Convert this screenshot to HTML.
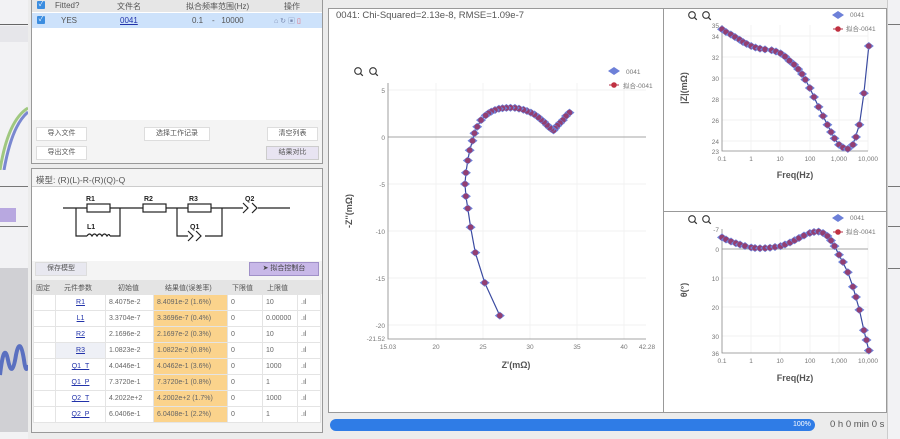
<!DOCTYPE html>
<html><head><meta charset="utf-8"><style>
*{margin:0;padding:0;box-sizing:border-box}
body{width:900px;height:439px;overflow:hidden;background:#f2f2f4;font-family:"Liberation Sans","Noto Sans CJK SC",sans-serif;position:relative;color:#444}
.a{position:absolute}
.btn{position:absolute;height:14px;background:#fff;border:1px solid #ddd;font-size:7px;color:#555;text-align:center;line-height:12px}
.t{position:absolute;font-size:7px;color:#555}
table{border-collapse:collapse}
td{font-size:7px;color:#666;height:16px;border:1px solid #e4e4e4;padding-left:3px;background:#fff}
</style></head><body>
<div class="a" style="left:0;top:24px;width:28px;height:1px;background:#666"></div>
<div class="a" style="left:0;top:26px;width:28px;height:16px;background:#e6e6ea"></div>
<svg class="a" style="left:0;top:90px" width="28" height="80"><path d="M0 80 Q8 30 28 18" stroke="#a0c880" stroke-width="3" fill="none"/><path d="M4 80 Q12 35 28 22" stroke="#7a88d0" stroke-width="3" fill="none"/></svg>
<div class="a" style="left:0;top:186px;width:28px;height:1px;background:#777"></div>
<div class="a" style="left:0;top:208px;width:16px;height:14px;background:#b8a8e0"></div>
<div class="a" style="left:0;top:226px;width:28px;height:1px;background:#777"></div>
<div class="a" style="left:0;top:268px;width:28px;height:164px;background:#d0d0d4"></div>
<svg class="a" style="left:0;top:335px" width="28" height="50"><path d="M0 40 Q4 5 8 25 Q12 45 16 20 Q20 0 24 25 Q26 40 28 30" stroke="#5a70c0" stroke-width="4" fill="none"/></svg>
<div class="a" style="left:888px;top:24px;width:12px;height:1px;background:#777"></div>
<div class="a" style="left:888px;top:186px;width:12px;height:1px;background:#777"></div>
<div class="a" style="left:888px;top:226px;width:12px;height:1px;background:#777"></div>
<div class="a" style="left:888px;top:268px;width:12px;height:1px;background:#777"></div>
<div class="a" style="left:28px;top:0;width:860px;height:439px;background:#ececec;border-right:1px solid #ccc"></div>
<div class="a" style="left:31px;top:0;width:292px;height:164px;background:#fff;border:1px solid #999;border-top:none"></div>
<div class="a" style="left:32px;top:0;width:290px;height:12px;background:#e6e6e6"></div>
<div class="a" style="left:32px;top:13px;width:290px;height:15px;background:#cde2fb"></div>
<div class="a" style="left:37px;top:1px;width:8px;height:8px;background:#3b8de0;border-radius:1px;color:#fff;font-size:7px;line-height:8px;text-align:center">✓</div>
<div class="a" style="left:37px;top:16px;width:8px;height:8px;background:#3b8de0;border-radius:1px;color:#fff;font-size:7px;line-height:8px;text-align:center">✓</div>
<div class="t" style="left:55px;top:1px;font-size:8px">Fitted?</div>
<div class="t" style="left:117px;top:1px;font-size:8px">文件名</div>
<div class="t" style="left:186px;top:1px;font-size:8px">拟合频率范围(Hz)</div>
<div class="t" style="left:284px;top:1px;font-size:8px">操作</div>
<div class="t" style="left:61px;top:16px;font-size:8px">YES</div>
<div class="t" style="left:120px;top:16px;font-size:8px;color:#2233aa;text-decoration:underline">0041</div>
<div class="t" style="left:192px;top:16px;font-size:8px">0.1&nbsp;&nbsp;&nbsp;&nbsp;-&nbsp;&nbsp;&nbsp;10000</div>
<div class="t" style="left:274px;top:16px;font-size:7px;color:#7a8ab0">⌂ ↻ ▣ <span style="color:#e06070">▯</span></div>
<div class="a" style="left:32px;top:120px;width:290px;height:43px;background:#f4f4f4"></div>
<div class="btn" style="left:36px;top:127px;width:51px">导入文件</div>
<div class="btn" style="left:144px;top:127px;width:66px">选择工作记录</div>
<div class="btn" style="left:267px;top:127px;width:51px">清空列表</div>
<div class="btn" style="left:36px;top:146px;width:51px">导出文件</div>
<div class="btn" style="left:266px;top:146px;width:53px;background:#e8e4f2;border-color:#ccc">结果对比</div>
<div class="a" style="left:31px;top:168px;width:292px;height:265px;background:#f4f4f4;border:1px solid #999"></div>
<div class="t" style="left:36px;top:174px;font-size:8.5px">模型: (R)(L)-R-(R)(Q)-Q</div>
<div class="a" style="left:32px;top:186px;width:290px;height:1px;background:#ccc"></div>
<div class="a" style="left:32px;top:187px;width:290px;height:74px;background:#fff"></div>
<svg class="a" style="left:0;top:0" width="330" height="270">
<g stroke="#222" stroke-width="1.2" fill="none">
<path d="M63 208H87M110 208H143M166 208H188M211 208H243M258 208H290"/>
<rect x="87" y="204" width="23" height="8"/><rect x="143" y="204" width="23" height="8"/><rect x="188" y="204" width="23" height="8"/>
<path d="M76 208V236H87M110 236H120V208"/>
<path d="M87 236q2.5-4 5 0q2.5-4 5 0q2.5-4 5 0q2.5-4 5 0q2 -3 3 0"/>
<path d="M177 208V236H188M205 236H222V208"/>
<path d="M188 231l5 5l-5 5M196 231l5 5l-5 5"/>
<path d="M243 203l5 5l-5 5M252 203l5 5l-5 5"/>
</g>
<g font-size="7" font-weight="bold" fill="#222" font-family="Liberation Sans">
<text x="86" y="201">R1</text><text x="144" y="201">R2</text><text x="189" y="201">R3</text><text x="245" y="201">Q2</text><text x="87" y="229">L1</text><text x="190" y="229">Q1</text></g>
</svg>
<div class="btn" style="left:35px;top:262px;width:52px;height:14px;background:#e8e8f0">保存模型</div>
<div class="btn" style="left:249px;top:262px;width:70px;background:#c8b8e8;border-color:#a090c8;color:#444">➤ 拟合控制台</div>
<div class="a" style="left:32px;top:280px;width:290px;height:14px;background:#e4e4e4"></div>
<div class="t" style="left:36px;top:283px">固定</div><div class="t" style="left:64px;top:283px">元件参数</div><div class="t" style="left:118px;top:283px">初始值</div><div class="t" style="left:165px;top:283px">结果值(误差率)</div><div class="t" style="left:232px;top:283px">下限值</div><div class="t" style="left:267px;top:283px">上限值</div>
<table class="a" style="left:33px;top:294px;width:288px">
<tr><td style="width:22px"></td><td style="width:50px;text-align:center;color:#2233aa;text-decoration:underline;padding:0">R1</td><td style="width:48px">8.4075e-2</td><td style="width:74px;background:#fbd38c">8.4091e-2 (1.6%)</td><td style="width:35px">0</td><td style="width:35px">10</td><td>.ıl</td></tr>
<tr><td></td><td style="text-align:center;color:#2233aa;text-decoration:underline;padding:0">L1</td><td>3.3704e-7</td><td style="background:#fbd38c">3.3696e-7 (0.4%)</td><td>0</td><td>0.00000</td><td>.ıl</td></tr>
<tr><td></td><td style="text-align:center;color:#2233aa;text-decoration:underline;padding:0">R2</td><td>2.1696e-2</td><td style="background:#fbd38c">2.1697e-2 (0.3%)</td><td>0</td><td>10</td><td>.ıl</td></tr>
<tr><td></td><td style="text-align:center;color:#2233aa;text-decoration:underline;padding:0;background:#eef0f6">R3</td><td>1.0823e-2</td><td style="background:#fbd38c">1.0822e-2 (0.8%)</td><td>0</td><td>10</td><td>.ıl</td></tr>
<tr><td></td><td style="text-align:center;color:#2233aa;text-decoration:underline;padding:0">Q1_T</td><td>4.0446e-1</td><td style="background:#fbd38c">4.0462e-1 (3.6%)</td><td>0</td><td>1000</td><td>.ıl</td></tr>
<tr><td></td><td style="text-align:center;color:#2233aa;text-decoration:underline;padding:0">Q1_P</td><td>7.3720e-1</td><td style="background:#fbd38c">7.3720e-1 (0.8%)</td><td>0</td><td>1</td><td>.ıl</td></tr>
<tr><td></td><td style="text-align:center;color:#2233aa;text-decoration:underline;padding:0">Q2_T</td><td>4.2022e+2</td><td style="background:#fbd38c">4.2002e+2 (1.7%)</td><td>0</td><td>1000</td><td>.ıl</td></tr>
<tr><td></td><td style="text-align:center;color:#2233aa;text-decoration:underline;padding:0">Q2_P</td><td>6.0406e-1</td><td style="background:#fbd38c">6.0408e-1 (2.2%)</td><td>0</td><td>1</td><td>.ıl</td></tr>
</table>
<div class="a" style="left:328px;top:8px;width:559px;height:405px;background:#fff;border:1px solid #999"></div>
<div class="a" style="left:663px;top:8px;width:1px;height:405px;background:#999"></div>
<div class="a" style="left:663px;top:211px;width:224px;height:1px;background:#999"></div>
<div class="t" style="left:336px;top:10px;font-size:9.5px;color:#555">0041: Chi-Squared=2.13e-8, RMSE=1.09e-7</div>
<svg class="a" style="left:0;top:0" width="900" height="439" font-family="Liberation Sans" font-size="6.5" fill="#777">
<defs>
<g id="dm"><path d="M-5 0L0 -4L5 0L0 4Z" fill="#6d80d8"/><circle r="2.8" fill="#a02a50" opacity=".75"/></g>
<g id="zi"><circle cx="-2" cy="-1" r="3.3" fill="none" stroke="#333" stroke-width="1.1"/><path d="M0.3 1.3l2.5 2.5" stroke="#333" stroke-width="1.3"/></g>
</defs>
<g stroke="#eee" stroke-width="0.7">
<path d="M436 83V339M483 83V339M530 83V339M577 83V339M624 83V339M388 90H646M388 184H646M388 231H646M388 278H646M388 325H646"/></g>
<path d="M388 137H646" stroke="#888" stroke-width=".8"/>
<path d="M388 83V339H646" stroke="#888" stroke-width=".8" fill="none"/>
<g text-anchor="end"><text x="385" y="93">5</text><text x="385" y="140">0</text><text x="385" y="187">-5</text><text x="385" y="234">-10</text><text x="385" y="281">-15</text><text x="385" y="328">-20</text><text x="385" y="341">-21.52</text></g>
<g text-anchor="middle"><text x="388" y="349">15.03</text><text x="436" y="349">20</text><text x="483" y="349">25</text><text x="530" y="349">30</text><text x="577" y="349">35</text><text x="624" y="349">40</text><text x="647" y="349">42.28</text></g>
<text x="516" y="368" font-size="9" font-weight="bold" fill="#555" text-anchor="middle">Z'(mΩ)</text>
<text transform="translate(352 211) rotate(-90)" font-size="9" font-weight="bold" fill="#555" text-anchor="middle">-Z''(mΩ)</text>
<use href="#zi" x="360" y="72"/><use href="#zi" x="375" y="72"/>
<path d="M608 71L614 67L620 71L614 75Z" fill="#6d80d8"/><text x="626" y="74">0041</text>
<path d="M609 85H619" stroke="#b0304a"/><circle cx="614" cy="85" r="2.8" fill="#c03040"/><text x="623" y="88">拟合-0041</text>
<polyline fill="none" stroke="#3a4aa0" stroke-width="1.2" points="569.5,112.6 562.9,120.1 557.3,125.7 553.5,130.4 549.7,127.6 544.1,122 538.4,117.3 530.9,112.6 523.4,109.7 514.9,107.9 506.4,107.9 498.9,108.8 491.3,111.6 485.7,115.4 481,120.1 477.2,126.7 474.4,133.2 472.5,140.8 469.7,150.2 467.8,160.5 465.9,172.7 465,184 465.9,196.2 467.8,208.4 470.6,227.2 475.3,252.6 484.7,282.7 499.8,315.6"/>
<g>
<use href="#dm" x="569.5" y="112.6"/><use href="#dm" x="566" y="116"/><use href="#dm" x="562.9" y="120.1"/><use href="#dm" x="560" y="123"/><use href="#dm" x="557.3" y="125.7"/><use href="#dm" x="555" y="128.5"/><use href="#dm" x="553.5" y="130.4"/><use href="#dm" x="551.5" y="129"/><use href="#dm" x="549.7" y="127.6"/><use href="#dm" x="547" y="125"/><use href="#dm" x="544.1" y="122"/><use href="#dm" x="541" y="119.5"/><use href="#dm" x="538.4" y="117.3"/><use href="#dm" x="534.5" y="114.5"/><use href="#dm" x="530.9" y="112.6"/><use href="#dm" x="527" y="111"/><use href="#dm" x="523.4" y="109.7"/><use href="#dm" x="519" y="108.6"/><use href="#dm" x="514.9" y="107.9"/><use href="#dm" x="510.5" y="107.7"/><use href="#dm" x="506.4" y="107.9"/><use href="#dm" x="502.5" y="108.2"/><use href="#dm" x="498.9" y="108.8"/><use href="#dm" x="495" y="110"/><use href="#dm" x="491.3" y="111.6"/><use href="#dm" x="488.5" y="113.3"/><use href="#dm" x="485.7" y="115.4"/><use href="#dm" x="481" y="120.1"/><use href="#dm" x="477.2" y="126.7"/><use href="#dm" x="474.4" y="133.2"/><use href="#dm" x="472.5" y="140.8"/><use href="#dm" x="469.7" y="150.2"/><use href="#dm" x="467.8" y="160.5"/><use href="#dm" x="465.9" y="172.7"/><use href="#dm" x="465" y="184"/><use href="#dm" x="465.9" y="196.2"/><use href="#dm" x="467.8" y="208.4"/><use href="#dm" x="470.6" y="227.2"/><use href="#dm" x="475.3" y="252.6"/><use href="#dm" x="484.7" y="282.7"/><use href="#dm" x="499.8" y="315.6"/>
</g>
<g stroke="#eee" stroke-width="0.7"><path d="M751 25V151M780 25V151M810 25V151M839 25V151M722 36H868M722 57H868M722 78H868M722 99H868M722 120H868M722 141H868M868 25V151"/></g>
<path d="M722 25V151H868" stroke="#888" stroke-width=".8" fill="none"/>
<g text-anchor="end"><text x="719" y="28">35</text><text x="719" y="39">34</text><text x="719" y="60">32</text><text x="719" y="81">30</text><text x="719" y="102">28</text><text x="719" y="123">26</text><text x="719" y="144">24</text><text x="719" y="154">23</text></g>
<g text-anchor="middle"><text x="722" y="161">0.1</text><text x="751" y="161">1</text><text x="780" y="161">10</text><text x="810" y="161">100</text><text x="839" y="161">1,000</text><text x="868" y="161">10,000</text></g>
<text x="795" y="178" font-size="9" font-weight="bold" fill="#555" text-anchor="middle">Freq(Hz)</text>
<text transform="translate(687 88) rotate(-90)" font-size="9" font-weight="bold" fill="#555" text-anchor="middle">|Z|(mΩ)</text>
<use href="#zi" x="694" y="16"/><use href="#zi" x="708" y="16"/>
<path d="M832 15L838 11L844 15L838 19Z" fill="#6d80d8"/><text x="850" y="17">0041</text>
<path d="M833 29H843" stroke="#b0304a"/><circle cx="838" cy="29" r="2.8" fill="#c03040"/><text x="846" y="31">拟合-0041</text>
<polyline fill="none" stroke="#3a4aa0" stroke-width="1.2" points="722,29.2 730.8,34.5 739.6,39.7 746.7,43.9 751.2,46 760,48.6 771.6,50.2 780.6,53.4 789.4,60.7 798.2,69.1 805.3,79.6 809.8,88 818.6,106.9 827.4,124.8 834.5,138.4 839,144.7 847.8,148.9 852.9,144.7 859.4,124.8 863.9,93.3 868.8,46"/>
<g>
<use href="#dm" x="722" y="29.2"/><use href="#dm" x="726" y="32"/><use href="#dm" x="730.8" y="34.5"/><use href="#dm" x="735" y="37"/><use href="#dm" x="739.6" y="39.7"/><use href="#dm" x="743" y="42"/><use href="#dm" x="746.7" y="43.9"/><use href="#dm" x="751.2" y="46"/><use href="#dm" x="755.5" y="47.5"/><use href="#dm" x="760" y="48.6"/><use href="#dm" x="765" y="49.4"/><use href="#dm" x="771.6" y="50.2"/><use href="#dm" x="776" y="51.5"/><use href="#dm" x="780.6" y="53.4"/><use href="#dm" x="785" y="56.5"/><use href="#dm" x="789.4" y="60.7"/><use href="#dm" x="794" y="64.5"/><use href="#dm" x="798.2" y="69.1"/><use href="#dm" x="802" y="74"/><use href="#dm" x="805.3" y="79.6"/><use href="#dm" x="809.8" y="88"/><use href="#dm" x="814" y="97"/><use href="#dm" x="818.6" y="106.9"/><use href="#dm" x="823" y="116"/><use href="#dm" x="827.4" y="124.8"/><use href="#dm" x="831" y="132"/><use href="#dm" x="834.5" y="138.4"/><use href="#dm" x="839" y="144.7"/><use href="#dm" x="843" y="147.5"/><use href="#dm" x="847.8" y="148.9"/><use href="#dm" x="852.9" y="144.7"/><use href="#dm" x="856" y="137"/><use href="#dm" x="859.4" y="124.8"/><use href="#dm" x="863.9" y="93.3"/><use href="#dm" x="868.8" y="46"/>
</g>
<g stroke="#eee" stroke-width="0.7"><path d="M751 229V353M780 229V353M810 229V353M839 229V353M722 278H868M722 307H868M722 336H868M868 229V353"/></g>
<path d="M722 249H868" stroke="#888" stroke-width=".8"/>
<path d="M722 229V353H868" stroke="#888" stroke-width=".8" fill="none"/>
<g text-anchor="end"><text x="719" y="232">-7</text><text x="719" y="252">0</text><text x="719" y="281">10</text><text x="719" y="310">20</text><text x="719" y="339">30</text><text x="719" y="356">36</text></g>
<g text-anchor="middle"><text x="722" y="363">0.1</text><text x="751" y="363">1</text><text x="780" y="363">10</text><text x="810" y="363">100</text><text x="839" y="363">1,000</text><text x="868" y="363">10,000</text></g>
<text x="795" y="381" font-size="9" font-weight="bold" fill="#555" text-anchor="middle">Freq(Hz)</text>
<text transform="translate(687 290) rotate(-90)" font-size="9" font-weight="bold" fill="#555" text-anchor="middle">θ(°)</text>
<use href="#zi" x="694" y="220"/><use href="#zi" x="708" y="220"/>
<path d="M832 218L838 214L844 218L838 222Z" fill="#6d80d8"/><text x="850" y="220">0041</text>
<path d="M833 232H843" stroke="#b0304a"/><circle cx="838" cy="232" r="2.8" fill="#c03040"/><text x="846" y="234">拟合-0041</text>
<polyline fill="none" stroke="#3a4aa0" stroke-width="1.2" points="722,237.4 735.9,243.2 751.2,247.5 765.1,248.1 780.6,246.1 794.6,240.3 809.8,233 818.6,231.6 827.4,236 834.5,246.1 839,254.8 847.8,272.2 852.9,286.7 859.4,309.9 863.9,330.2 868.8,350.5"/>
<g>
<use href="#dm" x="722" y="237.4"/><use href="#dm" x="726" y="239.5"/><use href="#dm" x="731" y="241.5"/><use href="#dm" x="735.9" y="243.2"/><use href="#dm" x="740" y="244.5"/><use href="#dm" x="745" y="246"/><use href="#dm" x="751.2" y="247.5"/><use href="#dm" x="755" y="248"/><use href="#dm" x="760" y="248.2"/><use href="#dm" x="765.1" y="248.1"/><use href="#dm" x="770" y="247.7"/><use href="#dm" x="775" y="247"/><use href="#dm" x="780.6" y="246.1"/><use href="#dm" x="785" y="244.5"/><use href="#dm" x="790" y="242.5"/><use href="#dm" x="794.6" y="240.3"/><use href="#dm" x="799" y="238"/><use href="#dm" x="804" y="235.5"/><use href="#dm" x="809.8" y="233"/><use href="#dm" x="814" y="232"/><use href="#dm" x="818.6" y="231.6"/><use href="#dm" x="823" y="233"/><use href="#dm" x="827.4" y="236"/><use href="#dm" x="831" y="240.5"/><use href="#dm" x="834.5" y="246.1"/><use href="#dm" x="839" y="254.8"/><use href="#dm" x="843" y="262"/><use href="#dm" x="847.8" y="272.2"/><use href="#dm" x="852.9" y="286.7"/><use href="#dm" x="856" y="297"/><use href="#dm" x="859.4" y="309.9"/><use href="#dm" x="863.9" y="330.2"/><use href="#dm" x="866.5" y="340"/><use href="#dm" x="868.8" y="350.5"/>
</g>
</svg>
<div class="a" style="left:330px;top:419px;width:485px;height:12px;background:#2f7ce6;border-radius:6px"></div>
<div class="t" style="left:793px;top:421px;color:#fff;font-size:7px">100%</div>
<div class="t" style="left:830px;top:419px;font-size:9.5px;color:#555">0 h 0 min 0 s</div>
</body></html>
